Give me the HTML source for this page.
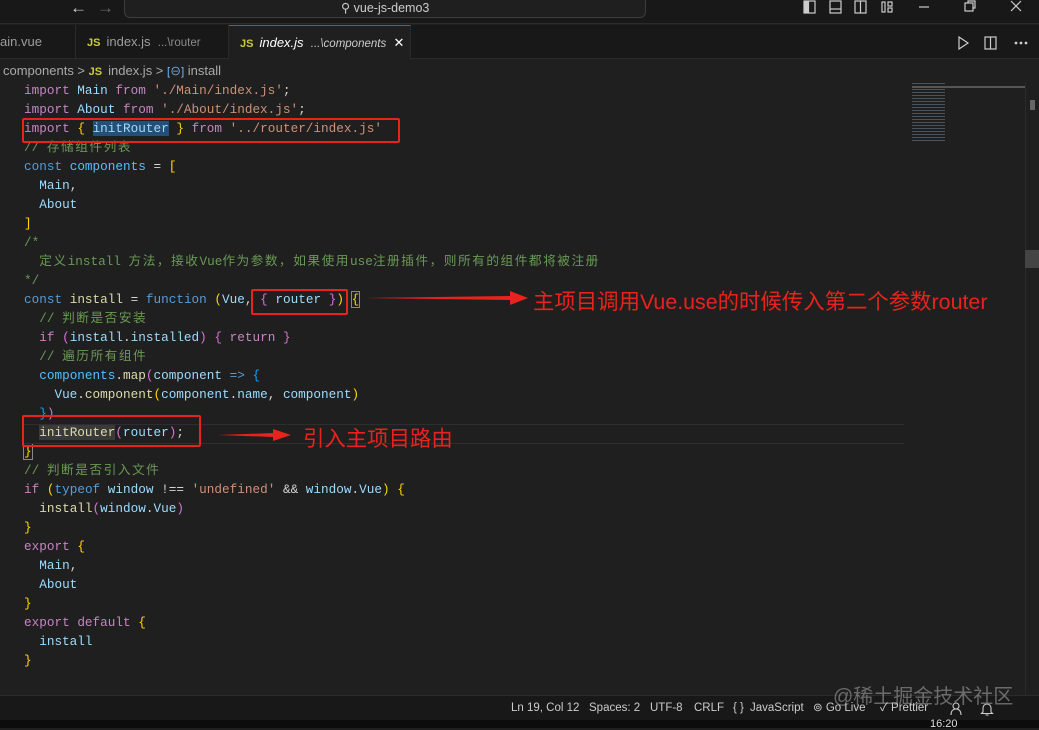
<!DOCTYPE html>
<html><head><meta charset="utf-8"><style>
*{margin:0;padding:0;box-sizing:border-box}
body{width:1039px;height:728px;background:#1f1f1f;position:relative;overflow:hidden;font-family:"Liberation Sans","Noto Sans CJK SC",sans-serif;color:#ccc}
.abs{position:absolute}
#title{left:0;top:0;width:1039px;height:24px;background:#181818;border-bottom:1px solid #2b2b2b}
#search{left:124px;top:-6px;width:522px;height:24px;border:1px solid #3c3c3c;border-radius:6px;background:#1f1f1f}
#tabs{left:0;top:25px;width:1039px;height:34px;background:#181818;border-bottom:1px solid #2b2b2b}
.tab{top:0;height:34px;font-size:13px;line-height:34px;color:#9d9d9d;border-right:1px solid #2b2b2b;white-space:nowrap}
.js{color:#cbcb41;font-weight:bold;font-size:11px;margin-right:6px}
.dim{font-size:11.5px;color:#8a8a8a}
pre{font-family:"Liberation Mono","Noto Sans CJK SC",monospace;font-size:12.7px;line-height:19px;position:absolute;left:24px;color:#9cdcfe;white-space:pre}
.k{color:#c586c0}.b{color:#569cd6}.s{color:#ce9178}.c{color:#6a9955}.f{color:#dcdcaa}.y{color:#ffd700}.p{color:#da70d6}.l{color:#179fff}.w{color:#d4d4d4}
.cj{letter-spacing:1.5px}
.box{position:absolute;border:2.5px solid #e8231d;border-radius:2px}
.ann{position:absolute;color:#e8231d;font-size:21.4px;font-family:"Liberation Sans","Noto Sans CJK SC",sans-serif;white-space:nowrap}
#status{left:0;top:695px;width:1039px;height:25px;background:#181818;border-top:1px solid #2b2b2b;font-size:11.5px;color:#ccc;line-height:24px}
#status span{position:absolute;white-space:nowrap}
</style></head><body>
<div id="title" class="abs"></div>
<div id="search" class="abs"></div>
<div class="abs" style="left:70px;top:-2px;font-size:17px;color:#ccc">&#8592;</div>
<div class="abs" style="left:97px;top:-2px;font-size:17px;color:#666">&#8594;</div>
<div class="abs" style="left:341px;top:0px;font-size:12.5px;color:#ccc">&#9906; vue-js-demo3</div>
<svg class="abs" style="left:800px;top:0" width="239" height="16" fill="none" stroke="#ccc" stroke-width="1.2">
<rect x="4" y="1" width="11" height="12"/><rect x="4.5" y="1.5" width="4" height="11" fill="#ccc"/>
<rect x="30" y="1" width="11" height="12"/><line x1="30" y1="9" x2="41" y2="9"/>
<rect x="55" y="1" width="11" height="12"/><line x1="60.5" y1="1" x2="60.5" y2="13"/>
<rect x="82" y="2" width="3" height="10"/><rect x="88" y="2" width="4" height="4"/><rect x="88" y="8" width="4" height="4"/>
<line x1="119" y1="7" x2="129" y2="7"/><rect x="165" y="3" width="8" height="8"/><path d="M168 3V1h7v7h-2"/>
<path d="M211 1l10 10M221 1l-10 10"/></svg>
<div id="tabs" class="abs">
<div class="tab abs" style="left:0;width:76px;padding-left:0">ain.vue</div>
<div class="tab abs" style="left:76px;width:153px;padding-left:11px"><span class="js">JS</span>index.js&nbsp; <span class="dim">...\router</span></div>
<div class="tab abs" style="left:229px;width:182px;padding-left:11px;background:#1f1f1f;color:#fff;border-top:1px solid #0078d4;height:35px"><span class="js">JS</span><i>index.js</i>&nbsp; <span class="dim" style="color:#ccc"><i>...\components</i></span>&nbsp; ✕</div>
<svg class="abs" style="left:955px;top:10px" width="80" height="16" fill="none" stroke="#ccc" stroke-width="1.2"><path d="M4 2l9 6-9 6z"/><rect x="30" y="2" width="11" height="12"/><line x1="35.5" y1="2" x2="35.5" y2="14"/><circle cx="61" cy="8" r=".8" fill="#ccc"/><circle cx="66" cy="8" r=".8" fill="#ccc"/><circle cx="71" cy="8" r=".8" fill="#ccc"/></svg>
</div>
<div class="abs" style="left:3px;top:63px;font-size:13px;color:#a9a9a9;white-space:nowrap">components &gt; <span class="js">JS</span>index.js &gt; <span style="color:#75beff;font-size:11px">[⊖]</span> install</div>
<div class="abs" style="left:912px;top:82px;width:110px;height:60px;opacity:.55;background:repeating-linear-gradient(#1f1f1f 0 1px,#6b7f8f 1px 2px,#1f1f1f 2px 3px);clip-path:polygon(0 0,30% 0,30% 100%,0 100%)"></div>
<div class="abs" style="left:912px;top:86px;width:113px;height:2px;background:#555"></div>
<div class="abs" style="left:1025px;top:82px;width:14px;height:613px;background:#1f1f1f;border-left:1px solid #2b2b2b"></div>
<div class="abs" style="left:1030px;top:100px;width:5px;height:10px;background:#666"></div>
<div class="abs" style="left:1025px;top:250px;width:14px;height:18px;background:#444"></div>
<pre style="top:81px"><span class="k">import</span> Main <span class="k">from</span> <span class="s">'./Main/index.js'</span><span class="w">;</span>
<span class="k">import</span> About <span class="k">from</span> <span class="s">'./About/index.js'</span><span class="w">;</span>
<span class="k">import</span> <span class="y">{</span> <span style="background:#264f78">initRouter</span> <span class="y">}</span> <span class="k">from</span> <span class="s">'../router/index.js'</span>
<span class="c">// <span class="cj">存储组件列表</span></span>
<span class="b">const</span> <span style="color:#4fc1ff">components</span> <span class="w">=</span> <span class="y">[</span>
  Main<span class="w">,</span>
  About
<span class="y">]</span>
<span class="c">/*</span>
<span class="c">  <span class="cj">定义</span>install <span class="cj">方法，接收</span>Vue<span class="cj">作为参数，如果使用</span>use<span class="cj">注册插件，则所有的组件都将被注册</span></span>
<span class="c">*/</span>
<span class="b">const</span> <span class="f">install</span> <span class="w">=</span> <span class="b">function</span> <span class="y">(</span>Vue<span class="w">,</span> <span class="p">{</span> router <span class="p">}</span><span class="y">)</span> <span class="y" style="outline:1px solid #888">{</span>
  <span class="c">// <span class="cj">判断是否安装</span></span>
  <span class="k">if</span> <span class="p">(</span>install<span class="w">.</span>installed<span class="p">)</span> <span class="p">{</span> <span class="k">return</span> <span class="p">}</span>
  <span class="c">// <span class="cj">遍历所有组件</span></span>
  <span style="color:#4fc1ff">components</span><span class="w">.</span><span class="f">map</span><span class="p">(</span>component <span class="b">=&gt;</span> <span class="l">{</span>
    Vue<span class="w">.</span><span class="f">component</span><span class="y">(</span>component<span class="w">.</span>name<span class="w">,</span> component<span class="y">)</span>
  <span class="l">}</span><span class="p">)</span>
  <span class="f" style="background:#3a3a3a">initRouter</span><span class="p">(</span>router<span class="p">)</span><span class="w">;</span>
<span class="y" style="outline:1px solid #888">}</span>
<span class="c">// <span class="cj">判断是否引入文件</span></span>
<span class="k">if</span> <span class="y">(</span><span class="b">typeof</span> window <span class="w">!==</span> <span class="s">'undefined'</span> <span class="w">&amp;&amp;</span> window<span class="w">.</span>Vue<span class="y">)</span> <span class="y">{</span>
  <span class="f">install</span><span class="p">(</span>window<span class="w">.</span>Vue<span class="p">)</span>
<span class="y">}</span>
<span class="k">export</span> <span class="y">{</span>
  Main<span class="w">,</span>
  About
<span class="y">}</span>
<span class="k">export</span> <span class="k">default</span> <span class="y">{</span>
  install
<span class="y">}</span></pre>
<div class="abs" style="left:24px;top:424px;width:880px;height:20px;border-top:1px solid #2e2e2e;border-bottom:1px solid #2e2e2e"></div>
<div class="box" style="left:22px;top:118px;width:378px;height:25px"></div>
<div class="box" style="left:251px;top:289px;width:97px;height:26px"></div>
<div class="box" style="left:22px;top:415px;width:179px;height:32px"></div>
<svg class="abs" style="left:360px;top:288px" width="175" height="20"><path d="M5 10L150 8V3L168 10 150 17V12Z" fill="#e8231d"/></svg>
<svg class="abs" style="left:215px;top:425px" width="80" height="20"><path d="M3 10L58 8V4L76 10 58 16V12Z" fill="#e8231d"/></svg>
<div class="ann" style="left:533px;top:285px">主项目调用Vue.use的时候传入第二个参数router</div>
<div class="ann" style="left:303px;top:422px">引入主项目路由</div>
<div id="status" class="abs">
<span style="left:511px">Ln 19, Col 12</span>
<span style="left:589px">Spaces: 2</span>
<span style="left:650px">UTF-8</span>
<span style="left:694px">CRLF</span>
<span style="left:733px">{ }</span>
<span style="left:750px">JavaScript</span>
<span style="left:813px">⊚ Go Live</span>
<span style="left:880px">✓ Prettier</span>
<svg class="abs" style="left:950px;top:6px" width="50" height="14" fill="none" stroke="#ccc" stroke-width="1.1"><circle cx="6" cy="4" r="3"/><path d="M1 13c0-4 2-6 5-6s5 2 5 6"/><path d="M33 10V6a4 4 0 0 1 8 0v4l1.5 1.5h-11z M35.5 13h3"/></svg>
</div>
<div class="abs" style="left:833px;top:680px;font-size:20px;color:rgba(200,200,200,.45);white-space:nowrap">@稀土掘金技术社区</div>
<div class="abs" style="left:0;top:720px;width:1039px;height:8px;background:#0c0c0c"></div>
<div class="abs" style="left:930px;top:718px;font-size:11px;color:#ddd">16:20</div>
</body></html>
